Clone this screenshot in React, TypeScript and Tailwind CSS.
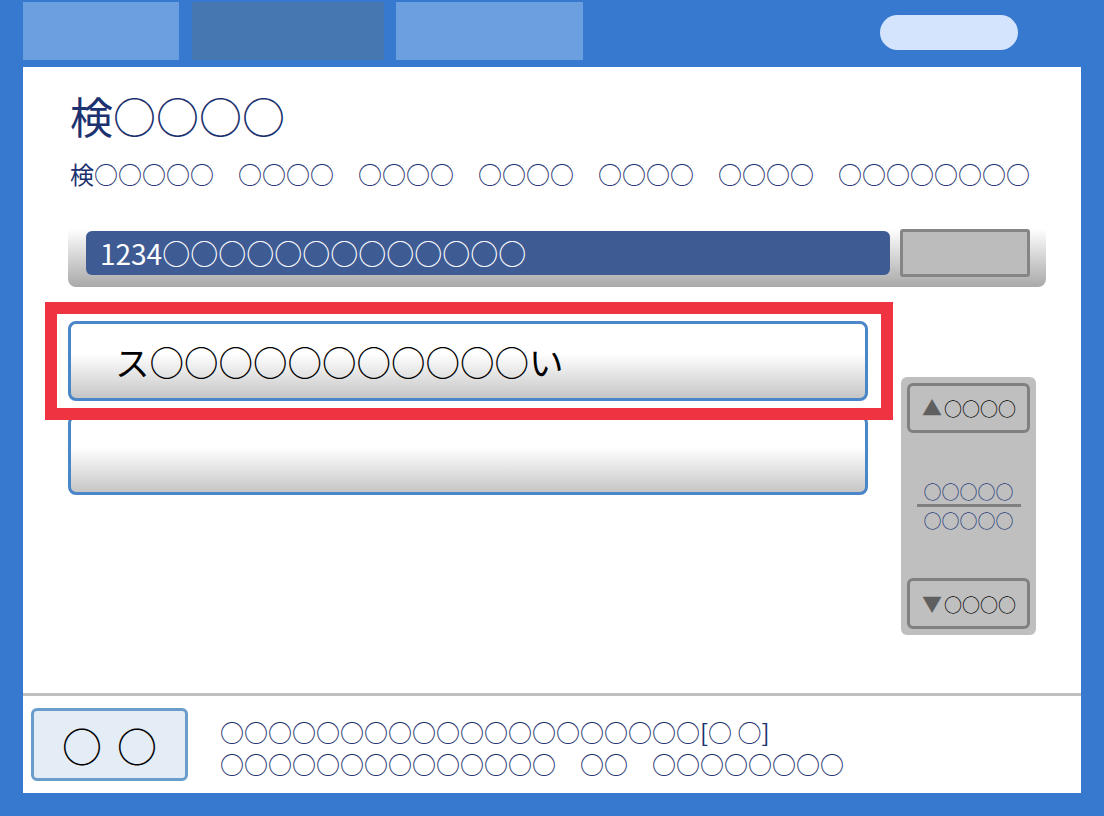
const jp = "font-['Noto_Sans_CJK_JP',sans-serif]";

function TopBar() {
  return (
    <div className="h-[67px] flex items-start">
      <div className="ml-[23px] mt-[2px] h-[58px] w-[156px] bg-[#6b9fe0]" />
      <div className="ml-[13px] mt-[2px] h-[58px] w-[192px] bg-[#4677b0]" />
      <div className="ml-[12px] mt-[2px] h-[58px] w-[187px] bg-[#6b9fe0]" />
      <div className="ml-[297px] mt-[15px] h-[35px] w-[138px] rounded-full bg-[#d4e4fc]" />
    </div>
  );
}

function SearchBar() {
  return (
    <div className="ml-[45px] mr-[35px] mt-[40px] h-[58px] rounded-b-lg bg-gradient-to-b from-white to-[#a9a9a9] flex items-start pl-[18px] pr-[16px] gap-[10px]">
      <div className="mt-[2px] h-[44px] flex-1 rounded-md bg-[#3e5b94] flex items-center pl-[14px] text-white text-[28px] leading-none">
        1234○○○○○○○○○○○○○
      </div>
      <div className="h-[48px] w-[130px] rounded-[3px] border-[3px] border-[#858585] bg-[#bcbcbc]" />
    </div>
  );
}

function ListItem({ children }: { children?: React.ReactNode }) {
  return (
    <div className="h-[80px] w-[800px] rounded-lg border-[3px] border-[#4a86c8] bg-[linear-gradient(to_bottom,#ffffff_40%,#c6c6c6)] flex items-center pl-[44px] text-black text-[34.5px] leading-none">
      {children}
    </div>
  );
}

function ScrollPanel() {
  return (
    <div className="ml-[33px] mt-[90px] h-[258px] w-[135px] rounded-md bg-[#bfbfbf] p-[6px] flex flex-col justify-between">
      <div className="h-[50px] rounded-md border-[3px] border-[#808080] flex items-center pl-[12px] text-[18px] leading-none text-black">
        <span className="text-[#5f5f5f] text-[20px] mr-[2px]">▲</span>○○○○
      </div>
      <div className="flex flex-col items-center text-[18px] leading-none text-[#1f3a7a]">
        <span>○○○○○</span>
        <div className="my-[4px] h-[3px] w-[104px] bg-[#808080]" />
        <span>○○○○○</span>
      </div>
      <div className="h-[51px] rounded-md border-[3px] border-[#808080] flex items-center pl-[12px] text-[18px] leading-none text-black">
        <span className="text-[#5f5f5f] text-[20px] mr-[2px]">▼</span>○○○○
      </div>
    </div>
  );
}

function Footer() {
  return (
    <div className="h-[97px] flex items-start border-t-[3px] border-[#c0c0c0]">
      <div className="ml-[8px] mt-[12px] h-[73px] w-[157px] rounded-md border-[3px] border-[#6a9ccc] bg-[#e4ecf6] flex items-center justify-center gap-[15px] text-[40px] leading-none text-black">
        <span>○</span>
        <span>○</span>
      </div>
      <div className="ml-[32px] mt-[20px] text-[24px] leading-[32px] text-[#1c3170]">
        <div>○○○○○○○○○○○○○○○○○○○○[○ ○]</div>
        <div>○○○○○○○○○○○○○○　○○　○○○○○○○○</div>
      </div>
    </div>
  );
}

export default function App() {
  return (
    <div className={`w-[1104px] h-[816px] bg-[#3779ce] ${jp}`}>
      <TopBar />
      <div className="ml-[23px] w-[1058px] h-[726px] bg-white flex flex-col">
        <div className="h-[626px]">
          <div className="pl-[47px] pt-[22px] text-[43px] leading-[52px] text-[#1c3170]">検○○○○</div>
          <div className="pl-[47px] mt-[18px] text-[24px] leading-[30px] text-[#1c3170]">
            検○○○○○　○○○○　○○○○　○○○○　○○○○　○○○○　○○○○○○○○
          </div>
          <SearchBar />
          <div className="flex items-start">
            <div className="relative ml-[45px] mt-[34px] flex flex-col gap-[14px]">
              <ListItem>ス○○○○○○○○○○○い</ListItem>
              <ListItem />
              <div className="absolute left-[-23px] top-[-19px] w-[848px] h-[118px] border-[12px] border-[#ef3340]" />
            </div>
            <ScrollPanel />
          </div>
        </div>
        <Footer />
      </div>
    </div>
  );
}
